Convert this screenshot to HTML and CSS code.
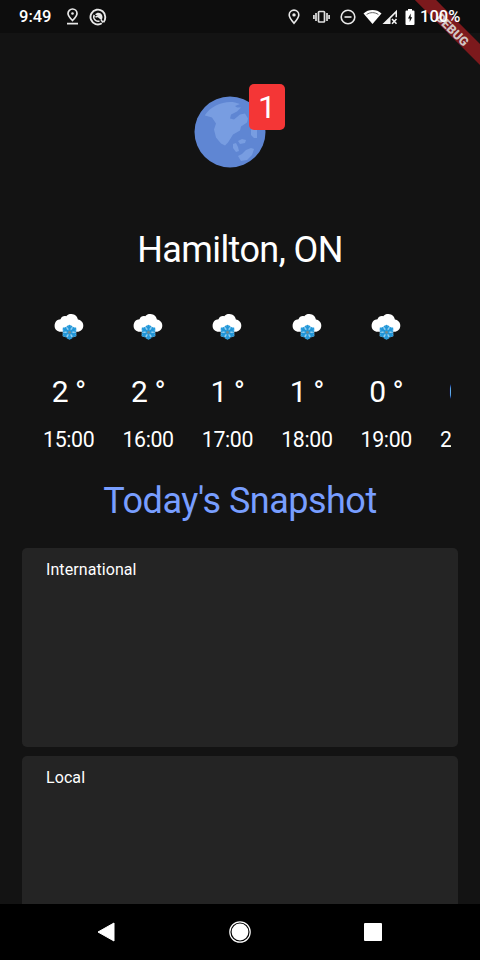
FILE: index.html
```html
<!DOCTYPE html>
<html lang="en">
<head>
<meta charset="utf-8">
<title>Today's Snapshot</title>
<link rel="stylesheet" href="styles.css">
</head>
<body>
<svg width="0" height="0" class="defs">
  <symbol id="snow" viewBox="0 0 30 28">
    <path d="M7.500 18.800C3.600 19.200.5 16.500.6 12.800.6 9 3.200 6.400 6.500 6.300 7.500 3.300 10 2.500 12.200 3.200 13.700 1.300 15.500.8 17.500.9c3.600.1 6 2.500 6.400 5.700 3.400.7 5.500 3 5.400 6.100-.1 3.700-2.800 6.200-6.500 6H7.500z" fill="#fff"/>
    <path d="M15.500 11.500l3 2.200 3.800.8v8.800l-3.800.9-3 2.300-3-2.300-3.800-.9v-8.800l3.800-.8z" fill="#8fcdf0"/>
    <g stroke="#2196d8" stroke-width="2" fill="none">
      <path d="M15.500 12v14.500M9 15.400l13 7.500M9 22.900l13-7.500"/>
      <path d="M13 13l2.500 2.300L18 13M13 25.500l2.500-2.300 2.500 2.300M9 18.300l3.300-.8-.9-3.200M22 18.300l-3.300-.8.9-3.200M9 20.200l3.300.8-.9 3.200M22 20.200l-3.300.8.9 3.200" stroke-width="1.500"/>
    </g>
    <circle cx="15.500" cy="19.200" r="1.500" fill="#6f8b94"/>
  </symbol>
</svg>
<div class="phone">
  <div class="ribbon"><span>DEBUG</span></div>
  <header class="status">
    <span class="clock">9:49</span>
    <svg class="pin" width="13" height="17" viewBox="0 0 13 17" fill="none" stroke="#e8e8e8" stroke-width="1.700"><path d="M6.500 12.500C4 10 2 7.800 2 5.500a4.500 4.500 0 0 1 9 0c0 2.300-2 4.500-4.500 7zM1 15.700h11"/><circle cx="6.500" cy="5.500" r="1.300" fill="#e8e8e8" stroke="none"/></svg>
    <svg class="at" width="18" height="18" viewBox="0 0 18 18" fill="none" stroke="#e8e8e8" stroke-width="1.900"><path d="M12.800 15.300A7.400 7.400 0 1 1 16.300 9c0 2.300-.6 4-1.700 5.200"/><path d="M10.500 12.900A4.200 4.200 0 0 1 5.300 7M12.700 11.500L8.800 8.200 6.500 9M12 12l2.300 2.500" stroke-width="1.600"/><path d="M6 6.500C8 4 11.500 4.200 13 7c.8 1.600.6 3.200-.2 4.800L9.500 8z" fill="#e8e8e8" stroke="none"/></svg>
    <svg class="loc" width="12" height="16" viewBox="0 0 12 16" fill="none" stroke="#e8e8e8" stroke-width="1.600"><path d="M6 14.200C3.200 10.800 1.200 8.500 1.200 5.900a4.800 4.800 0 0 1 9.600 0c0 2.600-2 4.900-4.800 8.300z"/><circle cx="6" cy="5.900" r="1.700" fill="#e8e8e8" stroke="none"/></svg>
    <svg class="vib" width="17" height="14" viewBox="0 0 17 14" fill="none" stroke="#e0e0e0" stroke-width="1.700"><rect x="5.500" y="1.500" width="6" height="10.500" rx=".8"/><path d="M3 3v8M.9 5v4M14 3v8M16.100 5v4"/></svg>
    <svg class="dnd" width="16" height="16" viewBox="0 0 16 16" fill="none" stroke="#e8e8e8" stroke-width="1.600"><circle cx="8" cy="8" r="6.800"/><path d="M4.500 8h7"/></svg>
    <svg class="wifi" width="19" height="16" viewBox="0 0 19 16"><path d="M.5 4.500C5.500-.1 13.500-.1 18.500 4.500L9.500 15z" fill="#fff"/><path d="M3.600 5.500c3.600-2.500 8.200-2.500 11.800 0" fill="none" stroke="#555" stroke-width=".9"/></svg>
    <svg class="sig" width="16" height="16" viewBox="0 0 16 16"><path d="M.5 15L15 .7v7.600h-1.500V4.500L8.500 9.500V15z" fill="#f2f2f2"/><path d="M10 10l4.500 4.700M14.500 10L10 14.700" stroke="#f2f2f2" stroke-width="1.600"/></svg>
    <svg class="bat" width="10" height="16" viewBox="0 0 10 16"><path d="M3 0h4v1.600h1.500q1 0 1 1V15q0 1-1 1h-7q-1 0-1-1V2.600q0-1 1-1H3z" fill="#fff"/><path d="M5.700 4.500L3 9.500h1.700V13L7.200 8.300H5.700z" fill="#111"/></svg>
    <span class="pct">100%</span>
  </header>

  <main>
    <div class="globe">
      <svg width="72" height="72" viewBox="0 0 72 72">
        <circle cx="36" cy="36" r="35.500" fill="#5f86d3"/>
        <g fill="#789de1">
          <path d="M11 19C17 10 30 4.500 41 6.500l5 1.500-5 2 2 1.500h4l-4 4-6 3-1 4 4 1 6-5 5-1 3 5-1 4-6 4-1 4-7 4-5 8-3 3-4-2-5-6-2-8 2-6-4-6-7-2z"/>
          <path d="M39 48l3-1 2 4 1 4-3 1-3-4zM44 45l4-2 4 1-1 3-5 1zM57 34l3-4 3 2v10l-3 0-3-3zM44 60l4-2 4-4 5-2 3 1-2 6-5 5-6 1z"/>
        </g>
      </svg>
      <span class="badge">1</span>
    </div>
    <h1>Hamilton, ON</h1>
    <div class="hours">
      <div class="hour"><svg><use href="#snow"/></svg><b>2 °</b><span>15:00</span></div>
      <div class="hour"><svg><use href="#snow"/></svg><b>2 °</b><span>16:00</span></div>
      <div class="hour"><svg><use href="#snow"/></svg><b>1 °</b><span>17:00</span></div>
      <div class="hour"><svg><use href="#snow"/></svg><b>1 °</b><span>18:00</span></div>
      <div class="hour"><svg><use href="#snow"/></svg><b>0 °</b><span>19:00</span></div>
      <div class="hour"><svg><use href="#snow"/></svg><b>0 °</b><span>20:00</span></div>
    </div>
    <h2>Today's Snapshot</h2>
    <section class="card">International</section>
    <section class="card">Local</section>
  </main>

  <nav>
    <svg width="18" height="20" viewBox="0 0 18 20"><path d="M1 10L17 1v18z" fill="#fff" stroke="#fff" stroke-linejoin="round"/></svg>
    <svg width="22" height="22" viewBox="0 0 22 22"><circle cx="11" cy="11" r="10.200" fill="none" stroke="#fff" stroke-width="1.200"/><circle cx="11" cy="11" r="8.400" fill="#fff"/></svg>
    <svg width="18" height="18" viewBox="0 0 18 18"><rect width="18" height="18" rx="1" fill="#fff"/></svg>
  </nav>
</div>
</body>
</html>
```
FILE: styles.css
```css
* { box-sizing: border-box; }
body { margin: 0; background: #131313; color: #fff; font-family: Roboto, sans-serif; }
svg { display: block; flex: none; }
.defs { position: absolute; }
.phone { position: relative; width: 480px; height: 960px; overflow: hidden; display: flex; flex-direction: column; }
.status { height: 33px; flex: none; display: flex; align-items: center; padding-left: 19px; background: #0d0d0d; font-size: 16.500px; font-weight: 500; white-space: nowrap; }
.clock { width: 33px; }
.clock, .pct { position: relative; z-index: 2; }
.pin { margin-left: 14px; }
.at { margin-left: 10px; }
.loc { margin-left: 181px; }
.vib { margin-left: 13px; }
.dnd { margin-left: 10px; }
.wifi { margin-left: 7px; }
.sig { margin-left: 0; }
.bat { margin-left: 7px; }
.pct { margin-left: 5px; }
.ribbon { position: absolute; z-index: 1; left: 395.500px; top: 23px; width: 120px; height: 15px; background: #7c191c; transform: rotate(45deg); text-align: center; font-size: 12.500px; font-weight: 900; line-height: 15px; color: #d2c5c5; }
.ribbon span { position: relative; left: -3px; top: 1.500px; }
main { flex: 1; min-height: 0; overflow: hidden; display: flex; flex-direction: column; align-items: center; padding: 63px 22px 0; }
.globe { position: relative; flex: none; width: 92px; height: 72px; }
.badge { position: absolute; left: 55px; top: -12px; width: 36px; height: 46px; border-radius: 5px; background: #f43636; font-size: 32px; line-height: 47px; text-align: center; }
h1, h2 { margin: 0; flex: none; font-size: 36px; line-height: 42px; font-weight: 400; white-space: nowrap; }
h1 { margin-top: 61px; letter-spacing: -0.600px; }
h2 { margin-top: 25px; letter-spacing: -0.500px; color: #789eff; }
.hours { flex: none; align-self: flex-start; margin: 36px 0 0 7px; width: 422px; height: 148px; overflow: hidden; display: flex; }
.hour { flex: none; width: 79.400px; display: flex; flex-direction: column; align-items: center; }
.hour svg { width: 30px; height: 28px; margin-top: 6px; }
.hour b { font-weight: 400; font-size: 30px; line-height: 36px; margin-top: 33px; letter-spacing: -0.500px; }
.hour span { font-size: 21.300px; line-height: 26px; margin-top: 17px; letter-spacing: -0.350px; }
.card { flex: none; width: 436px; height: 199px; border-radius: 5px; background: #242424; padding: 12px 24px; font-size: 16px; letter-spacing: 0.080px; line-height: 19px; margin-top: 9px; }
h2 + .card { margin-top: 26px; }
nav { flex: none; height: 56px; background: #000; display: flex; align-items: center; justify-content: space-between; padding: 0 98px 0 97px; }
```
